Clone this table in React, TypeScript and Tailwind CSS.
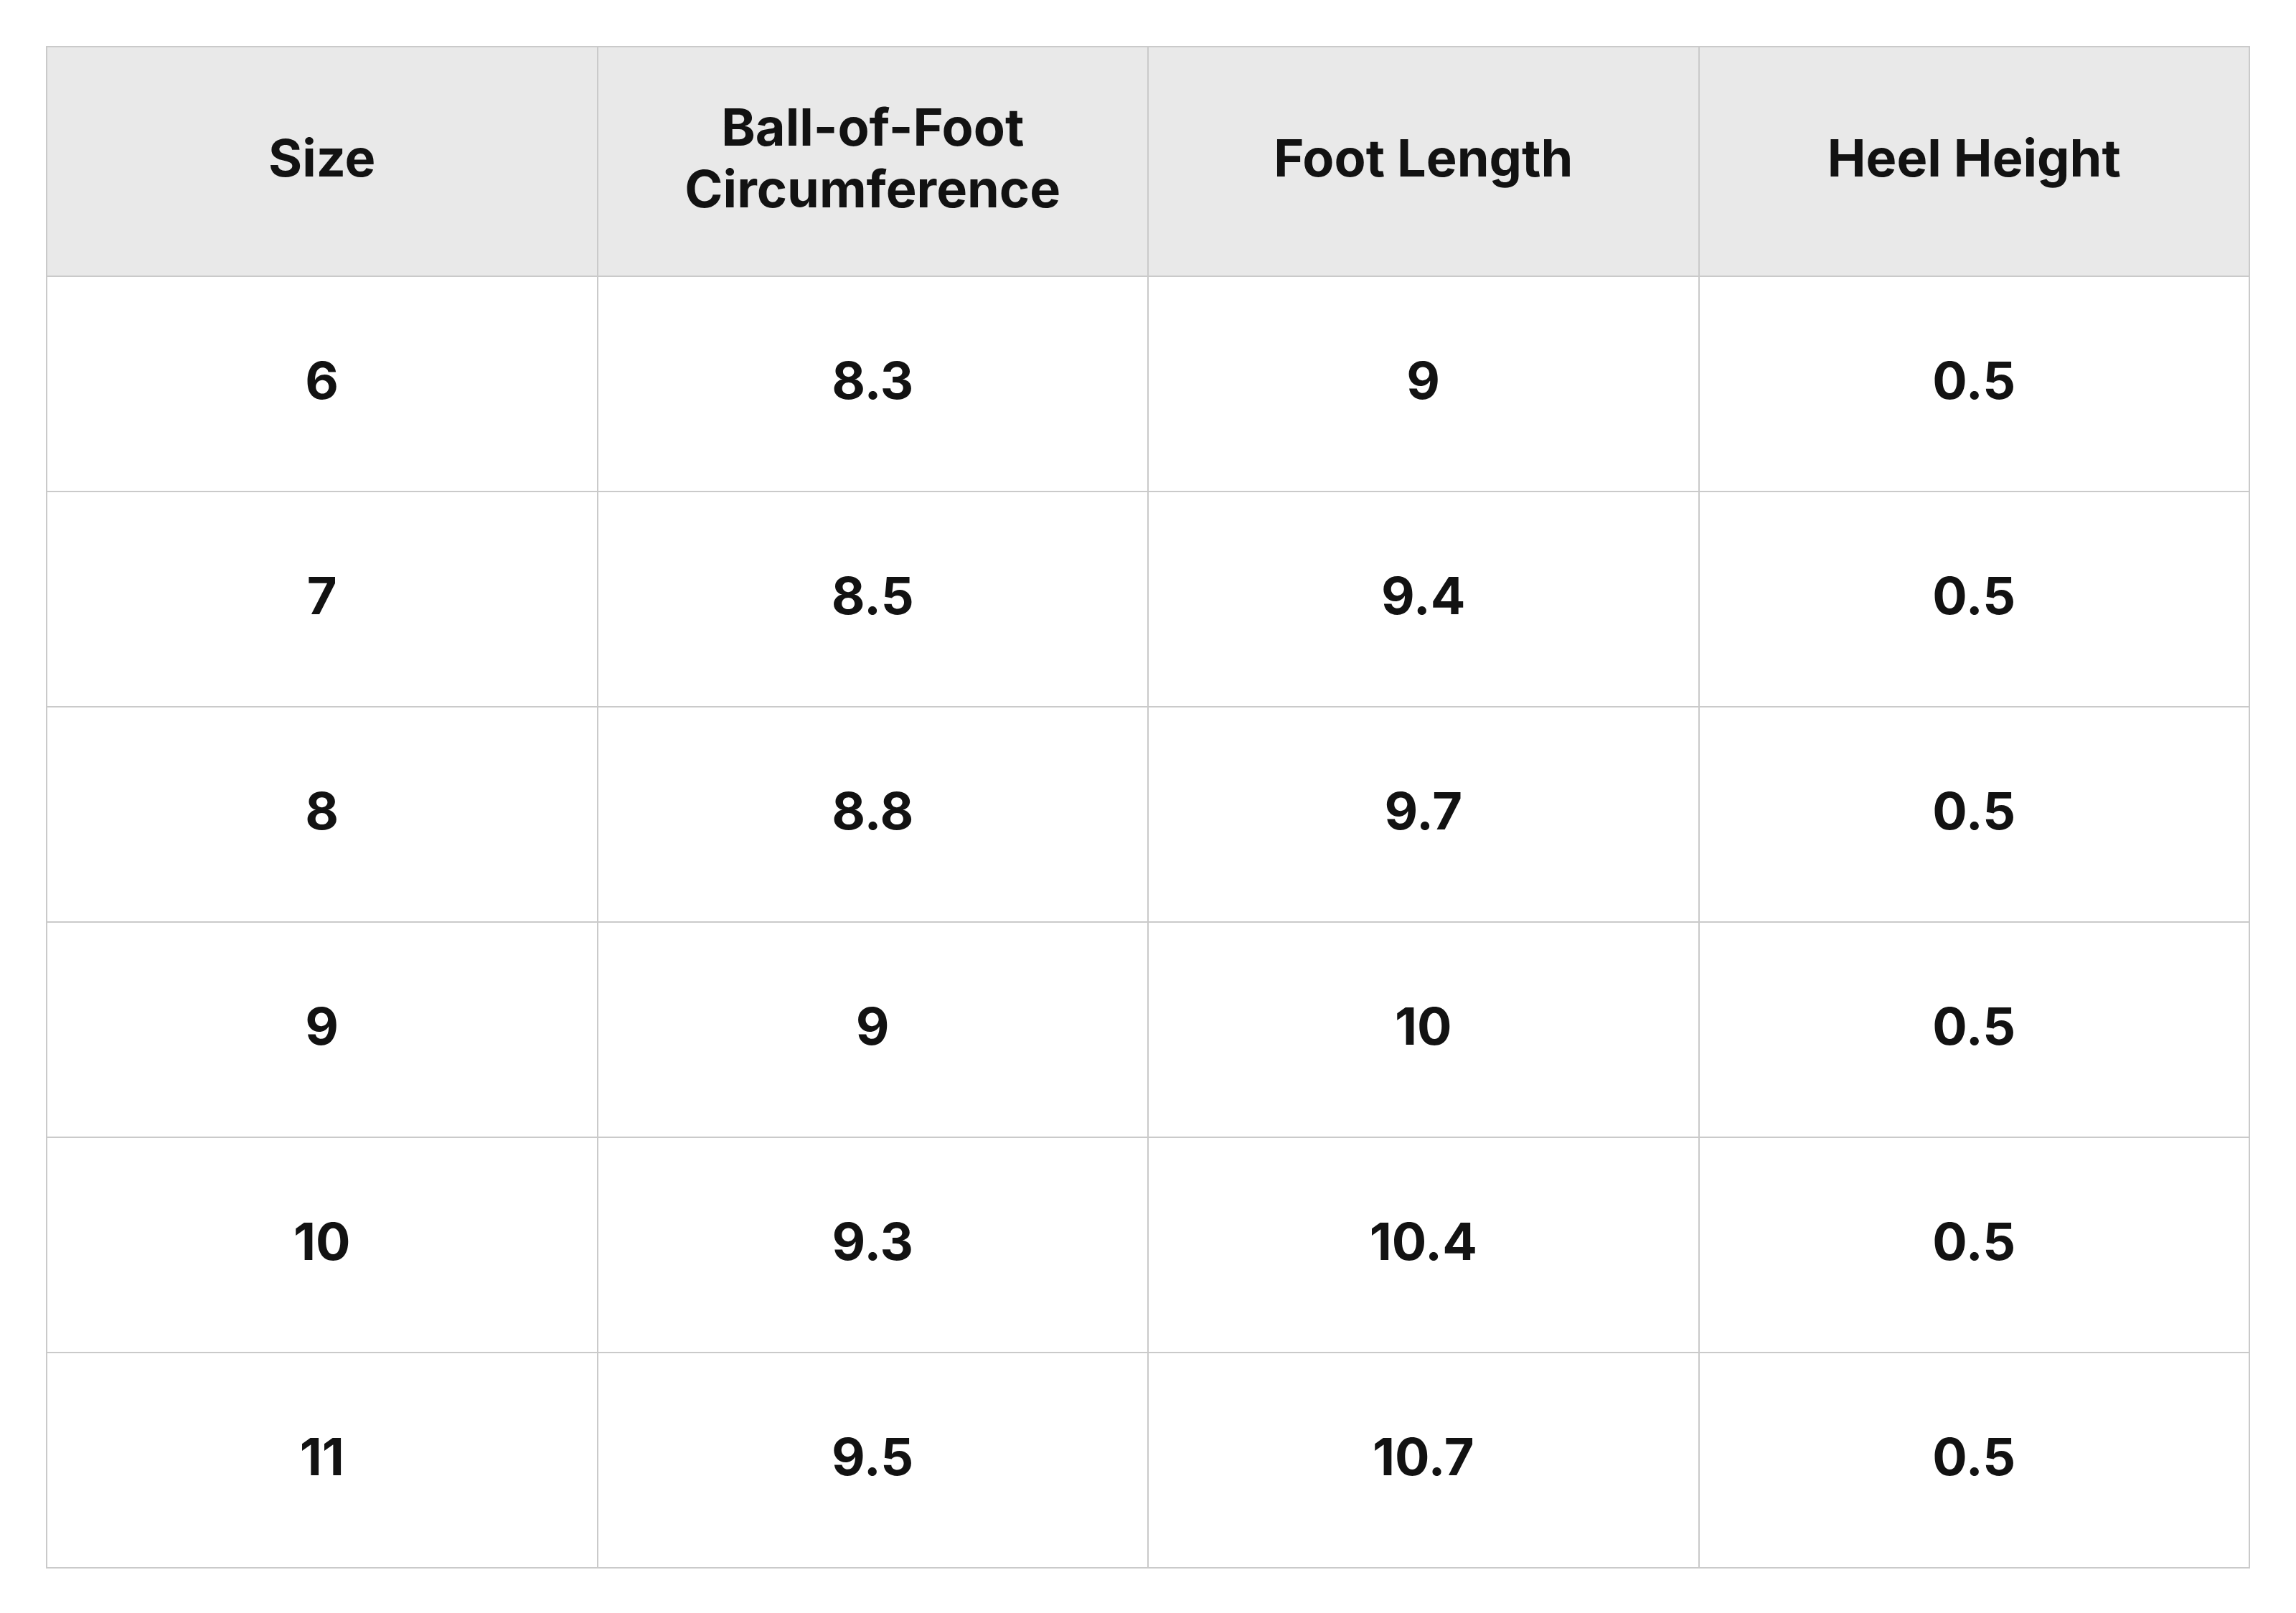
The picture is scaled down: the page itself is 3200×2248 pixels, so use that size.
const headers = ["Size", "Ball-of-Foot Circumference", "Foot Length", "Heel Height"];

const rows = [
  ["6", "8.3", "9", "0.5"],
  ["7", "8.5", "9.4", "0.5"],
  ["8", "8.8", "9.7", "0.5"],
  ["9", "9", "10", "0.5"],
  ["10", "9.3", "10.4", "0.5"],
  ["11", "9.5", "10.7", "0.5"],
];

export default function App() {
  return (
    <div className="min-h-screen bg-white p-16 font-['Inter',sans-serif] text-[#121212]">
      <table className="w-full table-fixed border-collapse border-2 border-[#cacaca]">
        <thead>
          <tr className="h-[320px] bg-[#e9e9e9]">
            {headers.map((h) => (
              <th
                key={h}
                className="border-2 border-[#cacaca] px-10 pb-[10px] text-center text-[72px] font-bold leading-[86px]"
              >
                {h}
              </th>
            ))}
          </tr>
        </thead>
        <tbody>
          {rows.map((row, i) => (
            <tr key={i} className="h-[300px]">
              {row.map((cell, j) => (
                <td
                  key={j}
                  className="border-2 border-[#cacaca] pb-[10px] text-center text-[72px] font-bold leading-[86px]"
                >
                  {cell}
                </td>
              ))}
            </tr>
          ))}
        </tbody>
      </table>
    </div>
  );
}
